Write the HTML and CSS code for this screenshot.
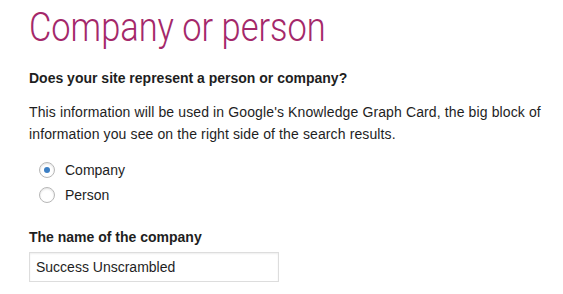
FILE: index.html
```html
<!DOCTYPE html>
<html>
<head>
<meta charset="utf-8">
<link rel="stylesheet" href="styles.css">
</head>
<body>
<main class="page">
  <h1 class="title">Company or person</h1>
  <h3 class="question">Does your site represent a person or company?</h3>
  <p class="desc">This information will be used in Google's Knowledge Graph Card, the big block of information you see on the right side of the search results.</p>
  <div class="options">
    <label class="option"><span class="radio checked"></span><span class="opt-text">Company</span></label>
    <label class="option"><span class="radio"></span><span class="opt-text">Person</span></label>
  </div>
  <label class="field-label">The name of the company</label>
  <div class="input">Success Unscrambled</div>
</main>
</body>
</html>
```
FILE: styles.css
```css
html, body {
  margin: 0;
  padding: 0;
  background: #ffffff;
}
.page {
  padding: 0 0 0 29px;
  font-family: "Liberation Sans", Arial, sans-serif;
  color: #1e1e1e;
  font-size: 14px;
}
.title {
  margin: 0;
  padding-top: 4px;
  font-family: Roboto, "Liberation Sans", sans-serif;
  font-weight: 300;
  font-size: 40px;
  line-height: 47px;
  color: #a4286a;
  transform: scaleX(0.86);
  transform-origin: left center;
  white-space: nowrap;
}
.question {
  margin: 18px 0 0 0;
  font-size: 14px;
  font-weight: bold;
  line-height: 18px;
}
.desc {
  margin: 14px 0 0 0;
  line-height: 22px;
  width: 530px;
  letter-spacing: 0.12px;
}
.options {
  margin-top: 16px;
  display: flex;
  flex-direction: column;
  gap: 8px;
  padding-left: 10px;
}
.option {
  display: flex;
  align-items: center;
  gap: 10px;
  height: 17px;
}
.radio {
  width: 14px;
  height: 14px;
  border: 1px solid #b7b7b7;
  border-radius: 50%;
  box-shadow: inset 0 1px 2px rgba(0,0,0,0.12);
  display: flex;
  align-items: center;
  justify-content: center;
  box-sizing: content-box;
}
.radio.checked::after {
  content: "";
  width: 6px;
  height: 6px;
  border-radius: 50%;
  background: #3c7fc4;
}
.field-label {
  display: block;
  margin-top: 25px;
  font-weight: bold;
  line-height: 18px;
}
.input {
  margin-top: 6px;
  height: 28px;
  border: 1px solid #dddddd;
  box-shadow: inset 0 1px 2px rgba(0,0,0,0.07);
  line-height: 28px;
  padding-left: 6px;
  box-sizing: content-box;
  width: 242px;
}
```
